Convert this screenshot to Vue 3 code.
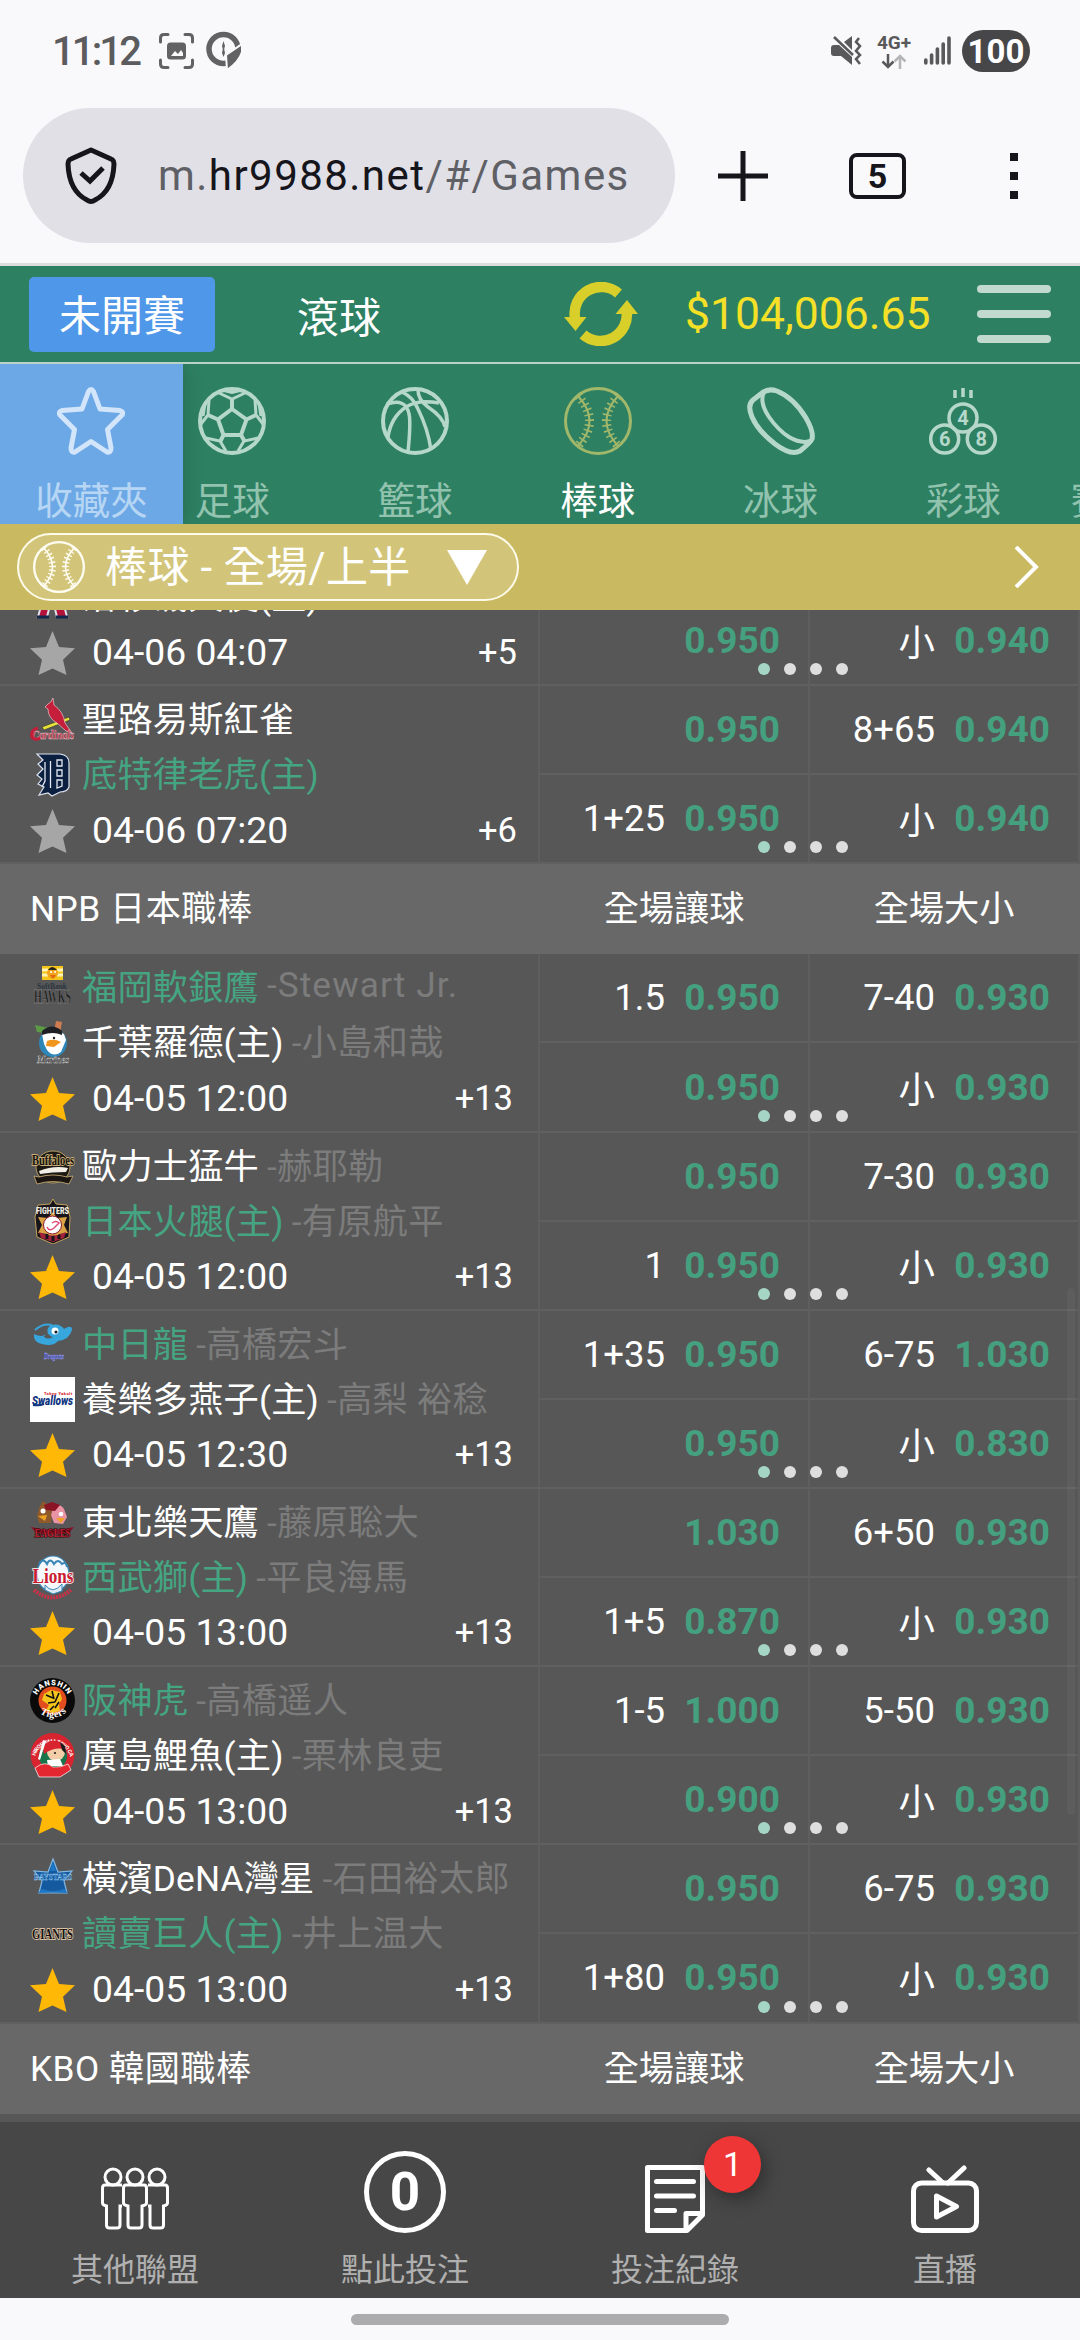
<script setup>
import { ref } from 'vue';

/**
 * Spielübersicht Baseball (mobile Ansicht)
 *
 * Kopfzeile mit Guthaben, Sportarten-Leiste, Ligenliste mit Quoten
 * und die untere Navigation.
 */

// =========================================================================
// Sportarten
// =========================================================================

const sports = [
  { key: 'soccer',     label: '足球' },
  { key: 'basketball', label: '籃球' },
  { key: 'baseball',   label: '棒球' },
  { key: 'hockey',     label: '冰球' },
  { key: 'lottery',    label: '彩球' },
];
const activeSport = ref('baseball');

// =========================================================================
// Team-Logos (Inhalt eines 45x45-SVG)
// =========================================================================

const FONT = 'font-family="Liberation Serif" font-weight="bold" text-anchor="middle"';

const logos = {
  angels: `<path d="M8 43 19 3h8l10 40H27l-2-8h-6l-2 8z" fill="#b5123b" stroke="#dfe3ee" stroke-width="2"/><path d="M7 43h12M26 43h12" stroke="#13284c" stroke-width="3"/>`,
  cardinals: `<path d="M12 30 39 20l1 3-26 10z" fill="#e8e337" stroke="#333" stroke-width=".6"/>
    <path d="M23 1q-2 5-5 6l-3 3 3 2q0 9 9 14l9 8 6 2-7-10Q33 14 24 8z" fill="#c41e3a" stroke="#e6c9cd" stroke-width=".7"/>
    <text x="23" y="42" ${FONT} font-style="italic" font-size="13" textLength="42" lengthAdjust="spacingAndGlyphs" fill="#c41e3a" stroke="#e8ced3" stroke-width=".4">Cardinals</text>
    <path d="M8 31q-8 2-6 9 3 4 8 1" fill="none" stroke="#c41e3a" stroke-width="3"/>`,
  detroit: `<path d="M7 2h23q9 1 9 9v24q-2 5-9 5l-8 4-4-3-9 2 5-8-6-3 4-5-5-4 6-6-5-5 5-4z" fill="#0b1f41" stroke="#dde3ee" stroke-width="1.2"/>
    <path d="M15 10v19l-3 6M20.500 9v27M27 8h5v6h-5zM27 18h5v6h-5zM27 28h5v6l-5 2z" fill="none" stroke="#e4e8f0" stroke-width="1.3"/>`,
  hawks: `<path d="M12 1h21v14H12z" fill="#f3c51a"/><path d="M12 5h6M27 5h6M12 10h6M27 10h6" stroke="#fff3b4" stroke-width="3"/>
    <circle cx="22.500" cy="8" r="5.500" fill="#f0a31b"/><path d="M18 5q4-6 9 0z" fill="#26221e"/><circle cx="21" cy="7" r="1" fill="#fff"/><circle cx="25" cy="7" r="1" fill="#fff"/><path d="m20 10 6 0-3 4z" fill="#e2670f"/>
    <text x="22" y="24" ${FONT} font-size="8" textLength="30" lengthAdjust="spacingAndGlyphs" fill="#2b3640">SoftBank</text>
    <text x="22.500" y="38" ${FONT} font-size="18" textLength="37" lengthAdjust="spacingAndGlyphs" fill="#1d1d1d" stroke="#a8a8a8" stroke-width=".3">HAWKS</text>`,
  marines: `<circle cx="23" cy="23" r="14" fill="#2c86b8"/><path d="M12 14q10-6 22 0l2 6-5 12q-8 6-14-2l-3-6z" fill="#fff"/>
    <path d="m5 5 14 3-3 5-9-1z" fill="#5d9a45"/><path d="m26 1 6 1-2 11-6-1z" fill="#cf7c50"/><path d="M12 11q10-9 20 0v4q-9-4-20 0z" fill="#1f2023"/>
    <path d="M17 21q7-3 14 1l-7 5-8-1z" fill="#f2951c"/><circle cx="24" cy="18" r="1.200" fill="#222"/>
    <text x="23" y="43" ${FONT} font-style="italic" font-size="11" textLength="32" lengthAdjust="spacingAndGlyphs" fill="#1c1c1c" stroke="#ddd" stroke-width=".4">Marines</text>`,
  buffaloes: `<ellipse cx="23" cy="23" rx="17" ry="16" fill="#1d1913" stroke="#b59b62"/><path d="M9 27q15-6 29-3l-2 4q-14 0-26 2z" fill="#f2efe6"/>
    <path d="m4 32 5 1q14-4 28 0l6-1-4 8q-16-5-32 0z" fill="#1a1510" stroke="#bfa671" stroke-width=".9"/>
    <text x="23" y="21" ${FONT} font-size="15" textLength="42" lengthAdjust="spacingAndGlyphs" fill="#16120c" stroke="#cbb079" stroke-width="1.800" paint-order="stroke">Buffaloes</text>`,
  fighters: `<path d="m23 0 3 5 11 1 3 12-1 20-16 7-16-7-2-20L8 6l12-1z" fill="#17151b" stroke="#c5a25b" stroke-width="1"/><path d="m23 13 4 6 10-1-3 8 4 8-9 1-6 7-5-7-10-1 4-8-4-8 10 1z" fill="#dba344"/>
    <circle cx="22.500" cy="26" r="9" fill="#fff" stroke="#8d1a33"/><path d="M17 28q2 5 7 1l5-5q-3-3-7 0" fill="none" stroke="#df4d7a" stroke-width="1.500"/>
    <path d="M9 33q13 7 27 0l-2 6-11 4-12-4z" fill="#a3223b"/><path d="M17 36v4M23 37v5M29 36v4" stroke="#17151b" stroke-width="3"/>
    <text x="22.500" y="14.500" font-family="Roboto" font-weight="900" text-anchor="middle" font-size="9" textLength="33" lengthAdjust="spacingAndGlyphs" fill="#f4efe4">FIGHTERS</text>`,
  dragons: `<path fill-rule="evenodd" d="M4 12q8 4 14 0-2-6 3-9 9-2 13 4 8-5 8 1-3 10-14 11-5 6-16 3Q3 20 4 12zM13 13q3 6 10 2-4-1-4-3-3 1-6 1z" fill="#36a6dd"/>
    <path d="M5 8q8-7 17-5" stroke="#36a6dd" stroke-width="2" fill="none"/><circle cx="25" cy="9" r="3.500" fill="#fff"/><circle cx="26" cy="10" r="1.600" fill="#11262e"/>
    <text x="24" y="37" ${FONT} font-style="italic" font-size="9" textLength="20" lengthAdjust="spacingAndGlyphs" fill="#3a49c4" stroke="#aab0ff" stroke-width=".3">Dragons</text>`,
  swallows: `<path d="M0 0h45v45H0z" fill="#fff"/><text x="28" y="18" font-family="Roboto" font-weight="900" text-anchor="middle" font-size="4" textLength="28" fill="#d5282f">Tokyo Yakult</text>
    <text x="22.500" y="28" font-family="Roboto" font-weight="900" font-style="italic" text-anchor="middle" font-size="12" textLength="41" lengthAdjust="spacingAndGlyphs" fill="#10357f">Swallows</text><path d="M3 28q6 1 11-1" stroke="#10357f" stroke-width="2" fill="none"/>`,
  eagles: `<path d="m10 6 3-5 5 4 4 6-1 12H9l-2-8z" fill="#8f5a2b"/><path d="M24 6q6-3 10 3l3 8-4 7-9-1-3-8z" fill="#e993a5"/><path d="m14 5 8-3 8 3-5 6-9-1z" fill="#8a1326"/>
    <circle cx="13" cy="11" r="2.500" fill="#fff"/><circle cx="31" cy="14" r="2.300" fill="#fff"/><path d="m8 16 9-1-2 6zM26 18l9 0-4 5z" fill="#eda222"/>
    <path d="M1 27q21 5 43 0l-5 6q-16 3-33 0z" fill="#8a1326"/><text x="22.500" y="37" ${FONT} font-size="12" textLength="36" lengthAdjust="spacingAndGlyphs" fill="#c21f30" stroke="#2a080b" stroke-width="1.200" paint-order="stroke">EAGLES</text>`,
  lions: `<ellipse cx="23" cy="19" rx="16" ry="18" fill="#f4f7fb" stroke="#3985b5" stroke-width="1.200"/><path d="M9 9q4-7 8 0 3-7 7 0 4-6 8 0 4-3 5 3" fill="none" stroke="#3985b5" stroke-width="2"/>
    <path d="M15 30q8 10 17-1v7l-9 3-8-4z" fill="#dcebf5" stroke="#3985b5"/><path d="M4 35q18 15 37 0" stroke="#ca3248" stroke-width="4" fill="none" stroke-dasharray="2 1"/>
    <text x="23" y="28" ${FONT} font-size="20" textLength="41" lengthAdjust="spacingAndGlyphs" fill="#c91c33" stroke="#fff" stroke-width="1.500" paint-order="stroke">Lions</text>`,
  tigers: `<circle cx="22.500" cy="22.500" r="22.500" fill="#0a0a0a"/><circle cx="22.500" cy="22.500" r="14" fill="#e24d1e"/><path d="m14 16 7-4 9 2 2 7-3 5 1 7-8 2-6-3 3-5-7-5z" fill="#f3c51c"/>
    <path d="m16 17 7 3M22 13l2 8M29 15l-4 9M18 25l7-1M29 24l-4 6M20 32l4-4" stroke="#111" stroke-width="1.600"/>
    <path id="tg-top" d="M6 20a17 17 0 0 1 33 0" fill="none"/><path id="tg-bot" d="M4 27a20 20 0 0 0 37 0" fill="none"/>
    <text font-family="Roboto" font-weight="900" font-size="7.500" fill="#fff"><textPath href="#tg-top" startOffset="3" textLength="38">HANSHIN</textPath></text>
    <text font-family="Liberation Serif" font-weight="bold" font-size="10" fill="#fff"><textPath href="#tg-bot" startOffset="10" textLength="29">Tigers</textPath></text>`,
  carp: `<circle cx="22.500" cy="22" r="22" fill="#d8242f"/><path id="cp-top" d="M5 24a18 18 0 0 1 35 0" fill="none"/><text font-family="Roboto" font-weight="700" font-size="5.500" fill="#fff"><textPath href="#cp-top" startOffset="1" textLength="53">HIROSHIMA TOYO CARP</textPath></text>
    <circle cx="23" cy="23" r="14" fill="#18754b"/><circle cx="26" cy="19" r="9" fill="#f3cda8"/><path d="M13 15q5-11 17-6l4 7q-10-2-20 5z" fill="#d8242f"/><path d="m30 9 5 4 1 8-4-4z" fill="#1b1b1b"/>
    <path d="m13 7 3 1-6 19-2-1z" fill="#fff"/><path d="m17 27 13-1 3 7H18z" fill="#fff"/><path d="M5 35q10-8 18-1 8 1 15-3l3 6-11 7H9z" fill="#e32630" stroke="#fff" stroke-width=".7"/><circle cx="25" cy="20" r="1.100" fill="#222"/>`,
  baystars: `<path d="m23 3 5 13 14-1-8 10 3 12H9l3-12-8-10 14 1z" fill="#155a9f" stroke="#82b9e6" stroke-width="1.200"/><path d="m23 6 3 9h-6zM12 33q11 4 22 0l4 4-15-1-15 1z" fill="#1c78c7"/>
    <text x="23" y="24" ${FONT} font-size="9" textLength="38" lengthAdjust="spacingAndGlyphs" fill="#1564ac" stroke="#9acbf0" stroke-width=".4">BAYSTARS</text>`,
  giants: `<text x="22.500" y="27.500" ${FONT} font-size="15" textLength="41" lengthAdjust="spacingAndGlyphs" fill="#15110f" stroke="#d8c0a4" stroke-width="2" paint-order="stroke">GIANTS</text>`,
};

// =========================================================================
// Ligen und Spiele
// team: [Logo, Name, Pitcher, Favorit]; odds: [Vorgabe, Quote, Total, Quote]
// =========================================================================

const leagues = [
  {
    name: null,
    games: [
      {
        teams: [null, ['angels', '洛杉磯天使(主)', '', false]],
        time: '04-06 04:07', more: '+5', starred: false,
        odds: [['', '', '', ''], ['', '0.950', '小', '0.940']],
      },
      {
        teams: [['cardinals', '聖路易斯紅雀', '', false], ['detroit', '底特律老虎(主)', '', true]],
        time: '04-06 07:20', more: '+6', starred: false,
        odds: [['', '0.950', '8+65', '0.940'], ['1+25', '0.950', '小', '0.940']],
      },
    ],
  },
  {
    name: 'NPB 日本職棒',
    games: [
      {
        teams: [['hawks', '福岡軟銀鷹', 'Stewart Jr.', true], ['marines', '千葉羅德(主)', '小島和哉', false]],
        time: '04-05 12:00', more: '+13', starred: true,
        odds: [['1.5', '0.950', '7-40', '0.930'], ['', '0.950', '小', '0.930']],
      },
      {
        teams: [['buffaloes', '歐力士猛牛', '赫耶勒', false], ['fighters', '日本火腿(主)', '有原航平', true]],
        time: '04-05 12:00', more: '+13', starred: true,
        odds: [['', '0.950', '7-30', '0.930'], ['1', '0.950', '小', '0.930']],
      },
      {
        teams: [['dragons', '中日龍', '高橋宏斗', true], ['swallows', '養樂多燕子(主)', '高梨 裕稔', false]],
        time: '04-05 12:30', more: '+13', starred: true,
        odds: [['1+35', '0.950', '6-75', '1.030'], ['', '0.950', '小', '0.830']],
      },
      {
        teams: [['eagles', '東北樂天鷹', '藤原聡大', false], ['lions', '西武獅(主)', '平良海馬', true]],
        time: '04-05 13:00', more: '+13', starred: true,
        odds: [['', '1.030', '6+50', '0.930'], ['1+5', '0.870', '小', '0.930']],
      },
      {
        teams: [['tigers', '阪神虎', '高橋遥人', true], ['carp', '廣島鯉魚(主)', '栗林良吏', false]],
        time: '04-05 13:00', more: '+13', starred: true,
        odds: [['1-5', '1.000', '5-50', '0.930'], ['', '0.900', '小', '0.930']],
      },
      {
        teams: [['baystars', '橫濱DeNA灣星', '石田裕太郎', false], ['giants', '讀賣巨人(主)', '井上温大', true]],
        time: '04-05 13:00', more: '+13', starred: true,
        odds: [['', '0.950', '6-75', '0.930'], ['1+80', '0.950', '小', '0.930']],
      },
    ],
  },
  { name: 'KBO 韓國職棒', games: [] },
];

const isLatin = (text) => /^[A-Za-z]/.test(text);
</script>

<template>
  <div class="screen">
    <!-- Statusleiste -->
    <div class="status">
      <span class="clock">11:12</span>
      <svg class="st-capture" width="35" height="36" viewBox="0 0 35 36" fill="none" stroke="#626264" stroke-width="3" stroke-linecap="round">
        <path d="M1.500 9V5q0-3.500 3.500-3.500h4M26 1.500h4q3.500 0 3.500 3.500v4M33.500 27v4q0 3.500-3.500 3.500h-4M9 34.500H5q-3.500 0-3.500-3.500v-4" />
        <rect x="9.500" y="11" width="16" height="14" rx="2" fill="#626264" />
        <path d="m12 23 4-5 3 3 3-4 2 3v3z" fill="#f9f9fb" stroke="none" />
      </svg>
      <svg class="st-compass" width="36" height="40" viewBox="0 0 36 40">
        <circle cx="17.500" cy="18" r="14.500" fill="none" stroke="#626264" stroke-width="5.500" />
        <path d="M36 13v8q-3 10-15 18l-1-15z" fill="#626264" stroke="#f9f9fb" stroke-width="2" />
        <path d="m17.500 10 1.500 5-.8 3 .8 4-1.500 4-1.500-4 .8-4-.8-3z" fill="#626264" />
      </svg>
      <span class="spacer"></span>
      <svg class="st-mute" width="31" height="30" viewBox="0 0 31 30">
        <path d="M0 12q0-3 3-3h5l13 12v8l-11-9H3q-3 0-3-3zM13 6l8-6v14z" fill="#59595b" />
        <path d="m3 1 19 18" stroke="#59595b" stroke-width="2.500" />
        <path d="m28 2-3 4 4 4-4 5 4 4-4 4 4 5" fill="none" stroke="#59595b" stroke-width="2.500" />
      </svg>
      <div class="net">
        <span>4G+</span>
        <svg width="26" height="15" viewBox="0 0 26 15" fill="none" stroke-width="2.500">
          <path d="M7 0v13M1.500 7.500 7 13l5.500-5.500" stroke="#59595b" />
          <path d="M19 15V2M13.500 7.500 19 2l5.500 5.500" stroke="#b5b5b7" />
        </svg>
      </div>
      <svg class="st-signal" width="27" height="30" viewBox="0 0 27 30" stroke="#59595b" stroke-width="3.600" stroke-linecap="round">
        <path d="M1.800 24v3M7.600 19v8M13.400 13v14M19.200 8v19M25 2v25" />
      </svg>
      <span class="battery">100</span>
    </div>

    <!-- Browserleiste -->
    <div class="browser">
      <div class="address">
        <svg width="52" height="58" viewBox="0 0 52 58" fill="none" stroke="#15151b" stroke-width="5">
          <path d="m26 3 20 9q3 1 3 5-1 27-19 36-4 3-8 0Q4 44 3 17q0-4 3-5z" stroke-linejoin="round" />
          <path d="m16 26 9 8 13-13" />
        </svg>
        <span class="url">m.<b>hr9988.net</b>/#/Games</span>
      </div>
      <svg class="add" width="50" height="50" viewBox="0 0 50 50" stroke="#15151b" stroke-width="5"><path d="M25 0v50M0 25h50" /></svg>
      <span class="tab-count">5</span>
      <span class="kebab"><i></i><i></i><i></i></span>
    </div>

    <!-- Kopfzeile -->
    <header class="topbar">
      <span class="btn-pre">未開賽</span>
      <span class="btn-live">滾球</span>
      <svg class="refresh" width="74" height="64" viewBox="0 0 74 64" fill="none" stroke="#d9cf2a" stroke-width="10.500">
        <path d="M54.500 11.500A26.500 26.500 0 0 0 11 36M19 52.500A26.500 26.500 0 0 0 62.500 28" />
        <path d="M0 35h22.500L11.500 49zM74 32H51.500L63 18z" fill="#d9cf2a" stroke="none" />
      </svg>
      <span class="balance">$104,006.65</span>
      <span class="menu"><i></i><i></i><i></i></span>
    </header>

    <!-- Sportarten -->
    <nav class="sports">
      <div class="sport favorites">
        <svg width="68" height="68" viewBox="0 0 68 68" fill="none" stroke="currentColor" stroke-width="5" stroke-linejoin="round">
          <path d="M31.500 4.500q2.500-4 5 0L43 22l20 1.500q4 1.500 2 4.500L50.500 42.500 54 61q0 5-4 4L34 54.500 18 65q-4 1-4-4l3.500-18.500L3 28q-2-3 2-4.500L25 22z" />
        </svg>
        <span>收藏夾</span>
      </div>
      <div class="sport-scroll">
        <div v-for="s in sports" :key="s.key" class="sport" :class="{ active: s.key === activeSport }" @click="activeSport = s.key">
          <svg width="68" height="68" viewBox="0 0 68 68" fill="none" stroke="currentColor" stroke-width="4">
            <template v-if="s.key === 'soccer'">
              <circle cx="34" cy="34" r="32" />
              <path d="M34 22 48.500 32.500 43 48H25.500L20 32.500zM34 22V11.500M20 32.500 10 28M48.500 32.500 58 28M25.500 48 22 55M43 48l4 7" />
              <path stroke-width="3" d="m21 6 13 6 13-6M26 3.500l8 2 8-2M11 13l-1 15-7 9M7 17 5 29M57 13l1 15 7 9M61 17l2 12M8 51l14 3 6 10M12 57l9 6M60 51l-14 3-6 10M56 57l-9 6" />
            </template>
            <template v-else-if="s.key === 'basketball'">
              <circle cx="34" cy="34" r="32" />
              <path stroke-width="3.500" d="M21 5q11 5 16 17 10 20 13 41M37 3q0 10 10 17 15 10 17 20M6 17q19-6 22 10 2 8-1 38M7 50q3-20 18-30 12-8 33-4" />
            </template>
            <template v-else-if="s.key === 'baseball'">
              <circle cx="34" cy="34" r="32.500" stroke-width="3" />
              <path stroke-width="2" d="M14 9q23 25 0 50M54 9q-23 25 0 50" />
              <path stroke-width="9" stroke-dasharray="1.600 3.700" d="M14 9q23 25 0 50M54 9q-23 25 0 50" />
            </template>
            <template v-else-if="s.key === 'hockey'">
              <path stroke-width="5" d="M15 6q6-5 15-2 17 7 29 27 8 14 6 21-1 3-12 12-9 5-25-7Q11 44 5 30q-5-12 1-17z" />
              <path d="M17 5q-5 10 5 25 9 13 20 20 12 7 22 4" />
            </template>
            <template v-else>
              <g stroke-width="3.500">
                <circle cx="34" cy="31" r="14" /><circle cx="15.700" cy="52" r="14" /><circle cx="52.300" cy="52" r="14" />
                <path d="M26 3v8M34 1v9M42 3v8" />
              </g>
              <g class="ball-no"><text x="34" y="38">4</text><text x="15.700" y="59">6</text><text x="52.300" y="59">8</text></g>
            </template>
          </svg>
          <span>{{ s.label }}</span>
        </div>
        <div class="sport next"><span>賽</span></div>
      </div>
    </nav>

    <!-- Marktauswahl -->
    <div class="market">
      <div class="market-pill">
        <svg width="52" height="52" viewBox="0 0 68 68" fill="none" stroke="#fffdf2">
          <circle cx="34" cy="34" r="32.500" stroke-width="3" />
          <path stroke-width="2" d="M14 9q23 25 0 50M54 9q-23 25 0 50" />
          <path stroke-width="9" stroke-dasharray="1.800 3.500" d="M14 9q23 25 0 50M54 9q-23 25 0 50" />
        </svg>
        <span>棒球 - 全場/上半</span>
        <svg width="40" height="35" viewBox="0 0 40 35"><path d="M0 0h40L20 35z" fill="#fff" /></svg>
      </div>
      <svg width="25" height="42" viewBox="0 0 25 42" fill="none" stroke="#fff" stroke-width="4"><path d="m2 1 20 20L2 41" /></svg>
    </div>

    <!-- Ligenliste -->
    <main class="list">
      <div class="list-inner">
        <section v-for="(league, li) in leagues" :key="li">
          <div v-if="league.name" class="league-head">
            <span class="league-name">{{ league.name }}</span>
            <span class="col-name">全場讓球</span>
            <span class="col-name">全場大小</span>
          </div>
          <div v-for="(g, gi) in league.games" :key="gi" class="game">
            <div class="info">
              <div v-for="(t, ti) in g.teams" :key="ti" class="team">
                <template v-if="t">
                  <svg class="logo" width="45" height="45" viewBox="0 0 45 45" v-html="logos[t[0]]"></svg>
                  <span class="name" :class="{ favored: t[3] }">{{ t[1] }}</span>
                  <span v-if="t[2]" class="pitcher" :class="{ latin: isLatin(t[2]) }">-{{ t[2] }}</span>
                </template>
              </div>
              <div class="team">
                <svg class="star" width="45" height="44" viewBox="0 0 45 44">
                  <path d="m22.500 0 6.500 16 16 1.200-12 11.500L36.500 44l-14-6.500L8.500 44 12 28.700 0 17.200 16 16z" :fill="g.starred ? '#ffb805' : '#a6a6a6'" />
                </svg>
                <span class="time">{{ g.time }}</span>
                <span class="more" :class="{ wide: g.more.length > 2 }">{{ g.more }}</span>
              </div>
            </div>
            <div class="odds">
              <template v-for="(row, ri) in g.odds" :key="ri">
                <div class="cell"><span>{{ row[0] }}</span><b>{{ row[1] }}</b></div>
                <div class="cell"><span>{{ row[2] }}</span><b>{{ row[3] }}</b></div>
              </template>
              <div class="dots"><i v-for="n in 4" :key="n" :class="{ on: n === 1 }"></i></div>
            </div>
          </div>
        </section>
      </div>
      <div class="scrollbar"></div>
    </main>

    <!-- Untere Navigation -->
    <nav class="bottom">
      <div class="nav-item">
        <div class="nav-icon">
          <svg class="people" width="68" height="63" viewBox="0 0 68 63" fill="none" stroke="#fff" stroke-width="3">
            <circle cx="12" cy="10" r="8" /><circle cx="34" cy="10" r="8" /><circle cx="56" cy="10" r="8" />
            <path d="M25 18h18q2.500 0 2.500 3v15q0 2-4.500 3v19q0 3-3 3h-8q-3 0-3-3V39q-4.500-1-4.500-3V21q0-3 2.500-3z" />
            <path d="M21 18H4q-2.500 0-2.500 3v15q0 2 4 3v19q0 3 3 3H16q3 0 3-3V39h2" />
            <path d="M47 18h17q2.500 0 2.500 3v15q0 2-4 3v19q0 3-3 3H52q-3 0-3-3V39h-2" />
          </svg>
        </div>
        <span>其他聯盟</span>
      </div>
      <div class="nav-item">
        <div class="nav-icon"><b class="count">0</b></div>
        <span>點此投注</span>
      </div>
      <div class="nav-item">
        <div class="nav-icon">
          <svg width="60" height="68" viewBox="0 0 60 68" fill="none" stroke="#fff" stroke-width="5" stroke-linejoin="round" stroke-linecap="round">
            <path d="M2.500 2.500h55V50L42 65.500H2.500zM41 63V48.500h16M11.500 16.500h37M11.500 31h37M11.500 45.500h18" />
          </svg>
          <em class="badge">1</em>
        </div>
        <span>投注紀錄</span>
      </div>
      <div class="nav-item">
        <div class="nav-icon">
          <svg width="68" height="68" viewBox="0 0 68 68" fill="none" stroke="#fff" stroke-width="5" stroke-linejoin="round" stroke-linecap="round">
            <rect x="2.500" y="18" width="63" height="47.500" rx="8" />
            <path d="m18 5 13 12M53 3 37 18M25.500 31v21l20-10.500z" />
          </svg>
        </div>
        <span>直播</span>
      </div>
    </nav>
    <div class="gesture"><i></i></div>
  </div>
</template>

<style>
body { margin: 0; background: #f9f9fb; }
</style>

<style scoped>
.screen {
  width: 1080px;
  height: 2340px;
  display: flex;
  flex-direction: column;
  overflow: hidden;
  background: #f9f9fb;
  color: #fff;
  font-family: Roboto, "Noto Sans CJK TC", sans-serif;
}

svg { display: block; flex: none; }

/* Statusleiste */
.status {
  height: 102px;
  box-sizing: border-box;
  flex: none;
  display: flex;
  align-items: center;
  padding: 0 50px 0 52px;
}

.clock {
  width: 107px;
  font-size: 40px;
  font-weight: 500;
  letter-spacing: -2.900px;
  color: #5c5c5e;
}

.st-compass { margin-left: 12px; }
.spacer     { flex: 1; }
.st-signal  { margin-left: 13px; }

.net {
  width: 34px;
  margin-left: 15px;
  display: flex;
  flex-direction: column;
  align-items: center;
  gap: 2px;
  font-size: 19px;
  font-weight: 700;
  line-height: 18px;
  color: #59595b;
}

.battery {
  width: 68px;
  height: 42px;
  margin-left: 11px;
  border-radius: 21px;
  background: #474749;
  text-align: center;
  font-size: 33px;
  font-weight: 700;
  line-height: 43px;
}

/* Browserleiste */
.browser {
  height: 164px;
  box-sizing: border-box;
  flex: none;
  display: flex;
  align-items: flex-start;
  padding: 6px 0 0 23px;
  border-bottom: 3px solid #dddde0;
}

.address {
  width: 652px;
  height: 135px;
  box-sizing: border-box;
  border-radius: 68px;
  background: #e1e0e6;
  display: flex;
  align-items: center;
  padding-left: 42px;
}

.url {
  margin-left: 41px;
  font-size: 42px;
  letter-spacing: 1.450px;
  color: #5f5f66;
}

.url b { font-weight: 400; color: #15151b; }

.add { margin: 43px 0 0 43px; }

.tab-count {
  width: 57px;
  height: 46px;
  box-sizing: border-box;
  margin: 45px 0 0 81px;
  border: 4px solid #15151b;
  border-radius: 8px;
  color: #15151b;
  text-align: center;
  font-size: 34px;
  font-weight: 700;
  line-height: 39px;
}

.kebab {
  margin: 45px 0 0 104px;
  display: flex;
  flex-direction: column;
  gap: 11px;
}

.kebab i { width: 8px; height: 8px; background: #15151b; }

/* Kopfzeile */
.topbar {
  height: 98px;
  box-sizing: border-box;
  flex: none;
  display: flex;
  align-items: center;
  padding-left: 29px;
  background: #2e8063;
  border-bottom: 2px solid #b9d3c8;
  font-size: 42px;
}

.btn-pre {
  width: 186px;
  height: 75px;
  box-sizing: border-box;
  padding-top: 2px;
  border-radius: 5px;
  background: #4f97e8;
  text-align: center;
  line-height: 76px;
}

.btn-live { width: 84px; margin: 1px 0 0 82px; }
.refresh  { margin-left: 183px; }

.balance {
  width: 246px;
  margin-left: 47px;
  color: #f4e027;
  font-size: 44.500px;
}

.menu {
  width: 74px;
  margin-left: 46px;
  display: flex;
  flex-direction: column;
  gap: 17px;
}

.menu i { height: 8px; border-radius: 4px; background: #c2dace; }

/* Sportarten */
.sports {
  height: 160px;
  flex: none;
  display: flex;
  background: #2e8063;
  overflow: hidden;
}

.sport-scroll { display: flex; margin-left: -42px; }

.sport {
  width: 182.800px;
  height: 160px;
  box-sizing: border-box;
  flex: none;
  padding-top: 23px;
  display: flex;
  flex-direction: column;
  align-items: center;
  gap: 24px;
  color: #b5d8ca;
  font-size: 37.500px;
  line-height: 44px;
}

.sport span { color: #92c3ae; white-space: nowrap; }

.favorites {
  position: relative;
  z-index: 1;
  background: #6ca8e6;
  color: #d3e5fa;
  box-shadow: 0 0 18px rgba(0, 0, 0, .18);
}

.favorites span     { color: #b6d6f4; }
.sport.active       { color: #a1b76a; }
.sport.active span  { color: #fff; }
.next               { padding: 115px 0 0 16px; align-items: flex-start; }

.ball-no text {
  fill: currentColor;
  stroke: none;
  font: 700 20px Roboto, sans-serif;
  text-anchor: middle;
}

/* Marktauswahl */
.market {
  height: 86px;
  box-sizing: border-box;
  flex: none;
  display: flex;
  align-items: center;
  justify-content: space-between;
  padding: 0 41px 0 17px;
  background: #c9b960;
}

.market-pill {
  width: 502px;
  height: 68px;
  box-sizing: border-box;
  border: 2px solid #fffbea;
  border-radius: 34px;
  background: #d2c57a;
  display: flex;
  align-items: center;
  padding: 0 30px 0 14px;
  font-size: 42px;
  letter-spacing: .4px;
  line-height: 64px;
}

.market-pill span { flex: 1; padding: 2px 0 0 20px; white-space: nowrap; }

/* Ligenliste */
.list {
  position: relative;
  height: 1512px;
  flex: none;
  overflow: hidden;
  background: #575757;
  font-size: 35.200px;
}

.list-inner { margin-top: -102px; }

.league-head {
  height: 90px;
  display: flex;
  background: #686868;
  line-height: 91px;
}

.league-name { width: 509px; padding-left: 30px; letter-spacing: .5px; }
.col-name    { width: 270px; text-align: center; }

.game {
  height: 178.200px;
  box-sizing: border-box;
  display: flex;
}

.info {
  width: 538px;
  box-sizing: border-box;
  padding: 6px 0 0 30px;
  border-bottom: 2px solid #606060;
}

.team {
  height: 55px;
  display: flex;
  align-items: center;
  white-space: nowrap;
}

.logo     { margin-right: 7px; }
.name     { padding-bottom: 6px; letter-spacing: .2px; }
.favored  { color: #45a481; }
.pitcher  { padding-bottom: 6px; margin-left: 8px; color: #7c7c7c; letter-spacing: .3px; }
.latin    { letter-spacing: 1.100px; }

.star  { margin: 2px 17px 0 0; }
.time  { font-size: 37.300px; flex: 1; }
.more  { font-size: 34.500px; margin-right: 21px; }
.more.wide { margin-right: 25px; }

.odds {
  position: relative;
  width: 542px;
  display: grid;
  grid-template-columns: 270px 270px;
  grid-template-rows: 1fr 1fr;
  border-right: 2px solid #5e5e5e;
  box-sizing: border-box;
}

.cell {
  display: flex;
  align-items: center;
  justify-content: flex-end;
  padding-right: 28px;
  border-left: 2px solid #5e5e5e;
  border-bottom: 2px solid #606060;
  font-size: 36.500px;
}

.cell b {
  width: 96px;
  margin-left: 19px;
  color: #45a07f;
  text-align: right;
  font-size: 37px;
  font-weight: 700;
}

.dots {
  position: absolute;
  left: 220px;
  bottom: 11px;
  display: flex;
  gap: 14px;
}

.dots i    { width: 12px; height: 12px; border-radius: 50%; background: #dedede; }
.dots i.on { background: #a5d5c4; }

.scrollbar {
  position: absolute;
  right: 5px;
  top: 678px;
  width: 8px;
  height: 527px;
  border-radius: 4px;
  background: rgba(255, 255, 255, .04);
}

/* Untere Navigation */
.bottom {
  height: 176px;
  flex: none;
  display: flex;
  background: #474747;
}

.nav-item {
  width: 270px;
  display: flex;
  flex-direction: column;
  align-items: center;
  gap: 15px;
  color: #b0b0b0;
  font-size: 32px;
  line-height: 44px;
}

.nav-icon {
  position: relative;
  height: 111px;
  display: flex;
  align-items: flex-end;
}

.people { margin-bottom: 3px; }

.count {
  width: 82px;
  height: 82px;
  box-sizing: border-box;
  border: 5px solid #fff;
  border-radius: 50%;
  color: #fff;
  text-align: center;
  font-size: 53px;
  line-height: 73px;
}

.badge {
  position: absolute;
  left: 59px;
  top: 14px;
  width: 57px;
  height: 57px;
  border-radius: 50%;
  background: #ee3636;
  box-shadow: 4px 6px 18px rgba(0, 0, 0, .35);
  color: #fff;
  text-align: center;
  font-size: 34px;
  font-style: normal;
  line-height: 57px;
}

.gesture {
  height: 42px;
  flex: none;
  display: flex;
  justify-content: center;
  padding-top: 16px;
  box-sizing: border-box;
}

.gesture i { width: 378px; height: 11px; border-radius: 6px; background: #acabad; }
</style>
